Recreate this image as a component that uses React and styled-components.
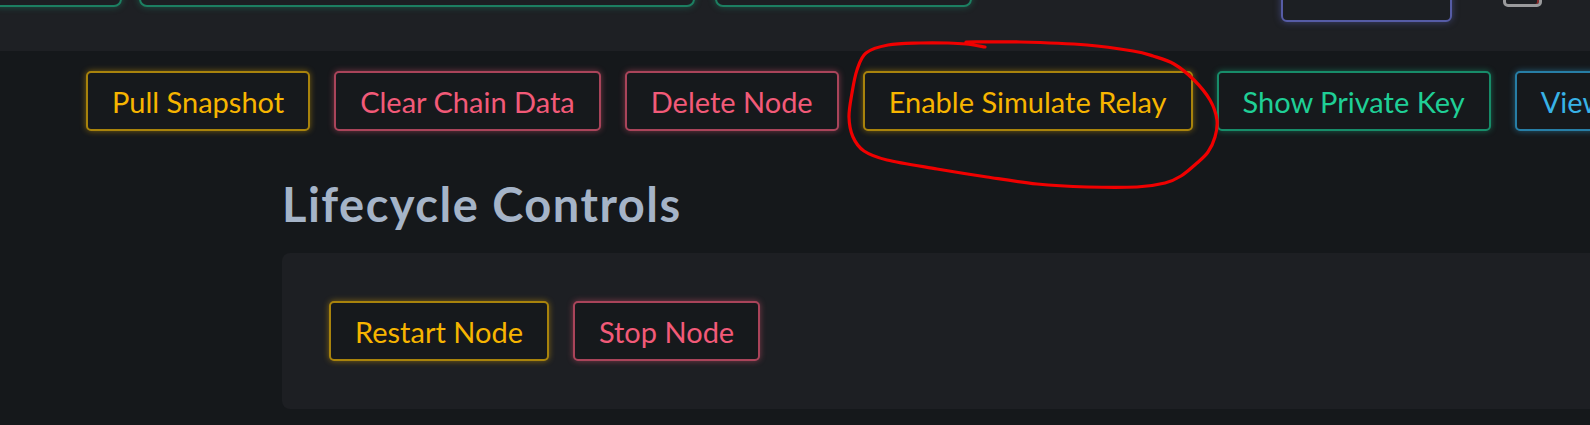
import React from 'react';
import styled, { createGlobalStyle, css } from 'styled-components';

const tones = {
    yellow: { text: '#f7b500', border: '#a8830c', glow: 'rgba(247, 181, 0, 0.45)' },
    pink: { text: '#f25a78', border: '#a9445a', glow: 'rgba(242, 90, 120, 0.45)' },
    green: { text: '#1fcf96', border: '#178c69', glow: 'rgba(31, 207, 150, 0.4)' },
    blue: { text: '#38b2e6', border: '#277ea6', glow: 'rgba(56, 178, 230, 0.45)' },
};

const GlobalStyle = createGlobalStyle`
    *, *::before, *::after {
        box-sizing:border-box;
    }
    html, body {
        margin:0;
        padding:0;
        background:#15181b;
        overflow:hidden;
    }
    body {
        font-family:Lato, "Open Sans", sans-serif;
        width:1590px;
        height:425px;
    }
`;

const Page = styled.div`
    position:relative;
    width:1590px;
    height:425px;
    overflow:hidden;
    background:#15181b;
`;

const TopBar = styled.header`
    height:51px;
    background:#1e2024;
    display:flex;
    align-items:flex-start;
    overflow:hidden;
`;

const NavBox = styled.div`
    flex:none;
    width:${p => p.$w}px;
    height:40px;
    margin-left:${p => p.$ml}px;
    margin-top:${p => p.$bottom - 40}px;
    border-radius:8px;
    background:#1c1f23;
    ${p => p.$tone === 'indigo'
        ? css`
            border:2px solid #565ca6;
            box-shadow:0 0 7px rgba(98, 106, 200, 0.5);
            border-radius:6px;
        `
        : css`
            border:2px solid #1c7f61;
            box-shadow:0 0 7px rgba(31, 190, 140, 0.35);
        `}
`;

const IconSquare = styled.div`
    flex:none;
    width:39px;
    height:33px;
    margin-left:51px;
    margin-top:-26px;
    border:3px solid #9a9a9c;
    border-radius:5px;
    box-shadow:inset -2px 0 0 #8a2b2b;
`;

const ActionRow = styled.div`
    display:flex;
    gap:24px;
    padding:20px 0 0 86px;
    white-space:nowrap;
`;

const GlowButton = styled.button`
    flex:none;
    height:60px;
    padding:0 24px;
    display:inline-flex;
    align-items:center;
    justify-content:center;
    background:#16191c;
    border:2px solid ${p => tones[p.$tone].border};
    border-radius:5px;
    box-shadow:0 0 6px ${p => tones[p.$tone].glow};
    color:${p => tones[p.$tone].text};
    font-family:Lato, "Open Sans", sans-serif;
    font-size:29px;
    font-weight:400;
    cursor:pointer;
`;

const Section = styled.section`
    padding-left:282px;
`;

const Heading = styled.h2`
    margin:45px 0 21px;
    font-size:47px;
    line-height:1.2;
    font-weight:700;
    letter-spacing:1.5px;
    color:#a5b4c8;
`;

const Panel = styled.div`
    width:1400px;
    padding:48px 47px;
    background:#1d1f23;
    border-radius:8px;
    display:flex;
    gap:24px;
`;

const Scribble = styled.svg`
    position:absolute;
    left:0;
    top:0;
    pointer-events:none;
`;

const circlePoints = [
    [985, 47], [966, 44], [948, 43], [920, 43], [888, 45], [866, 53], [857, 70],
    [852, 93], [849, 117], [853, 137], [864, 151], [887, 160], [937, 169],
    [987, 177], [1037, 184], [1087, 187], [1137, 187], [1165, 183], [1181, 176],
    [1197, 163], [1208, 152], [1215, 137], [1217, 120], [1210, 100], [1194, 80],
    [1174, 64], [1153, 56], [1133, 51], [1087, 45], [1020, 42], [966, 42],
];

// catmull-rom -> bezier so the hand-drawn ring stays smooth
const smoothPath = pts => {
    let d = `M${pts[0][0]},${pts[0][1]}`;
    for (let i = 0; i < pts.length - 1; i++) {
        const p0 = pts[i - 1] || pts[i];
        const p1 = pts[i];
        const p2 = pts[i + 1];
        const p3 = pts[i + 2] || p2;
        const c1 = [p1[0] + (p2[0] - p0[0]) / 6, p1[1] + (p2[1] - p0[1]) / 6];
        const c2 = [p2[0] - (p3[0] - p1[0]) / 6, p2[1] - (p3[1] - p1[1]) / 6];
        d += ` C${c1[0]},${c1[1]} ${c2[0]},${c2[1]} ${p2[0]},${p2[1]}`;
    }
    return d;
};

const actions = [
    { label: 'Pull Snapshot', tone: 'yellow' },
    { label: 'Clear Chain Data', tone: 'pink' },
    { label: 'Delete Node', tone: 'pink' },
    { label: 'Enable Simulate Relay', tone: 'yellow' },
    { label: 'Show Private Key', tone: 'green' },
    { label: 'View Node Logs', tone: 'blue' },
];

const App = () => {
    return (
        <Page>
            <GlobalStyle />
            <TopBar>
                <NavBox $w={132} $ml={-10} $bottom={7} />
                <NavBox $w={556} $ml={17} $bottom={7} />
                <NavBox $w={257} $ml={20} $bottom={7} />
                <NavBox $tone="indigo" $w={171} $ml={309} $bottom={22} />
                <IconSquare />
            </TopBar>
            <ActionRow>
                {actions.map(a => (
                    <GlowButton key={a.label} $tone={a.tone}>{a.label}</GlowButton>
                ))}
            </ActionRow>
            <Section>
                <Heading>Lifecycle Controls</Heading>
                <Panel>
                    <GlowButton $tone="yellow">Restart Node</GlowButton>
                    <GlowButton $tone="pink">Stop Node</GlowButton>
                </Panel>
            </Section>
            <Scribble width="1590" height="425" viewBox="0 0 1590 425">
                <path d={smoothPath(circlePoints)} fill="none" stroke="#f00000" strokeWidth="3.2" strokeLinecap="round" strokeLinejoin="round" />
            </Scribble>
        </Page>
    );
};

export default App;
